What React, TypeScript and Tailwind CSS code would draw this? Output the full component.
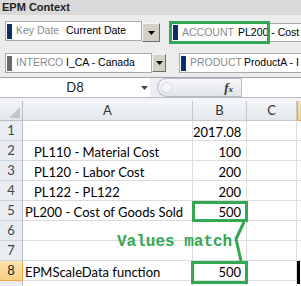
import React from "react";

const ui = { fontFamily: '"Liberation Sans", Arial, sans-serif' };
const cellFont = { fontFamily: 'Lato, "Liberation Sans", sans-serif' };

function Arrow() {
  return (
    <svg width="7" height="4" viewBox="0 0 7 4">
      <path d="M0 0 H7 L3.5 4 Z" fill="#000" />
    </svg>
  );
}

function Combo({
  label,
  value,
  bar,
  labelW,
  className,
}: {
  label: string;
  value: string;
  bar: string;
  labelW: string;
  className: string;
}) {
  return (
    <div
      className={`flex items-center bg-white border border-[#a9a9a9] text-[10.5px] whitespace-nowrap overflow-hidden ${className}`}
    >
      <div className={`w-[5px] h-[15px] ml-[1px] mr-[4px] shrink-0 ${bar}`} />
      <span className={`text-[#8a8a8a] shrink-0 ${labelW}`}>{label}</span>
      <span className="text-black">{value}</span>
    </div>
  );
}

function DropBtn({ className }: { className: string }) {
  return (
    <div
      className={`flex items-center justify-center bg-[#d4d0c8] border border-t-[#f4f4f4] border-l-[#f4f4f4] border-r-[#6e6e6e] border-b-[#6e6e6e] ${className}`}
    >
      <Arrow />
    </div>
  );
}

type Row = { n: number; a?: string; b?: string; indent?: boolean; sel?: boolean; hideNum?: boolean };

const rows: Row[] = [
  { n: 1, b: "2017.08" },
  { n: 2, a: "PL110 - Material Cost", b: "100", indent: true },
  { n: 3, a: "PL120 - Labor Cost", b: "200", indent: true },
  { n: 4, a: "PL122 - PL122", b: "200", indent: true },
  { n: 5, a: "PL200 - Cost of Goods Sold", b: "500" },
  { n: 6 },
  { n: 7 },
  { n: 8, a: "EPMScaleData function", b: "500", sel: true },
  { n: 9, hideNum: true },
];

function AccountHighlight() {
  return (
    <div className="absolute left-[169px] top-[21px] w-[101px] h-[23px] border-[3px] border-[#33a852] pointer-events-none" />
  );
}

export default function App() {
  return (
    <div className="relative w-[301px] h-[286px] overflow-hidden bg-white flex flex-col" style={ui}>
      {/* Title */}
      <div className="h-[15px] bg-[#d9d9d9] px-[2px] text-[11px] font-bold text-[#222] leading-[14px] shrink-0">
        EPM Context
      </div>
      {/* Context panel */}
      <div className="h-[62px] bg-[#ececec] shrink-0 flex flex-col pt-[6px] gap-[11px]">
        <div className="flex items-start h-[21px]">
          <Combo
            label="Key Date"
            value="Current Date"
            bar="bg-[#0b2f6e]"
            labelW="w-[50px]"
            className="ml-[5px] w-[137px] h-[20px]"
          />
          <DropBtn className="w-[18px] h-[19px] mt-[2px]" />
          <Combo
            label="ACCOUNT"
            value="PL200 - Cost"
            bar="bg-[#0b2f6e]"
            labelW="w-[56px]"
            className="ml-[11px] flex-1 h-[19px] mt-[2px] border-r-0"
          />
        </div>
        <div className="flex items-start h-[21px]">
          <Combo
            label="INTERCO"
            value="I_CA - Canada"
            bar="bg-[#6a6a6a]"
            labelW="w-[50px]"
            className="ml-[5px] w-[147px] h-[20px]"
          />
          <DropBtn className="w-[14px] h-[18px] mt-[1px]" />
          <Combo
            label="PRODUCT"
            value="ProductA - I"
            bar="bg-[#0b2f6e]"
            labelW="w-[54px]"
            className="ml-[13px] flex-1 h-[20px] border-r-0"
          />
        </div>
      </div>
      {/* Formula bar */}
      <div className="h-[21px] flex border-t border-[#a0a4aa] border-b border-b-[#b6bac0] bg-[#eceef1] shrink-0">
        <div className="w-[150px] bg-white relative flex items-center justify-center text-[13px] text-[#222]" style={cellFont}>
          D8
          <div className="absolute right-[2px] top-[8px]">
            <svg width="7" height="4" viewBox="0 0 7 4">
              <path d="M0 0 H7 L3.5 4 Z" fill="#444" />
            </svg>
          </div>
        </div>
        <div className="w-[7px]" />
        <div className="w-[84px] h-[19px] rounded-l-[10px] border border-r-0 border-[#b9bec6] bg-gradient-to-b from-[#f7f8fa] to-[#e1e4e8] flex items-center">
          <div className="w-[11px] h-[11px] rounded-full bg-[#f4f5f7] border border-[#d6d9de] ml-[3px]" />
          <div className="flex-1" />
          <div
            className="mr-[8px] italic font-bold text-[13px] text-[#333] leading-none"
            style={{ fontFamily: '"Liberation Serif", serif' }}
          >
            f<span className="text-[9px]">x</span>
          </div>
        </div>
        <div className="flex-1 bg-white border-l border-[#b9bec6]" />
      </div>
      <div className="h-[3px] bg-[#f3f4f6] shrink-0" />
      {/* Grid */}
      <div className="relative flex-1" style={cellFont}>
        <div className="grid grid-cols-[23px_170px_54px_50px_40px] auto-rows-[20px]">
          {/* Header row */}
          <div className="bg-gradient-to-b from-[#f3f5f8] to-[#e2e6eb] border-r border-b border-[#b8bec7] relative">
            <svg className="absolute right-[2px] bottom-[2px]" width="11" height="11" viewBox="0 0 11 11">
              <path d="M11 0 V11 H0 Z" fill="#c3c7cd" />
            </svg>
          </div>
          {["A", "B", "C"].map((c) => (
            <div
              key={c}
              className="bg-gradient-to-b from-[#f5f7f9] to-[#e3e7ec] border-r border-b border-[#c4c9d0] flex items-center justify-center text-[13px] text-[#333]"
            >
              {c}
            </div>
          ))}
          <div className="bg-gradient-to-b from-[#fbe4b4] to-[#f6cf7f] border-l border-[#f0a945] border-b" />
          {rows.map((r) => (
            <React.Fragment key={r.n}>
              <div
                className={`border-r border-b flex items-center justify-center text-[13px] ${
                  r.sel
                    ? "bg-gradient-to-b from-[#fbe2ae] to-[#f7d184] border-[#f0a945] text-[#222]"
                    : "bg-[#e9edf2] border-r-[#b8bec7] border-b-[#cdd3da] text-[#444]"
                }`}
              >
                {r.hideNum ? "" : r.n}
              </div>
              <div
                className={`border-r border-b border-[#dadcdd] text-[13px] text-black whitespace-nowrap overflow-visible leading-[18px] pt-[2px] ${
                  r.indent ? "pl-[11px]" : "pl-[2px]"
                }`}
              >
                {r.a ?? ""}
              </div>
              <div className="border-r border-b border-[#dadcdd] text-[13px] text-black text-right pr-[5px] leading-[18px] pt-[2px]">
                {r.b ?? ""}
              </div>
              <div className="border-r border-b border-[#dadcdd]" />
              <div className="border-b border-[#dadcdd]" />
            </React.Fragment>
          ))}
        </div>
        {/* Overlays */}
        <div className="absolute left-[192px] top-[100px] w-[56px] h-[21px] border-[3px] border-[#33a852]" />
        <div className="absolute left-[191px] top-[160px] w-[57px] h-[23px] border-[3px] border-[#33a852]" />
        <svg className="absolute left-0 top-0" width="301" height="184" viewBox="0 0 301 184">
          <polyline
            points="244,121 236,138 241,160"
            fill="none"
            stroke="#33a852"
            strokeWidth="3"
          />
        </svg>
        <div
          className="absolute left-[117px] top-[133px] text-[16px] leading-[16px] font-bold text-[#33a852] whitespace-nowrap"
          style={{ fontFamily: '"Liberation Mono", "Courier New", monospace' }}
        >
          Values match
        </div>
        <div className="absolute left-[297px] top-[160px] w-[3px] h-[23px] bg-black" />
      </div>
      <AccountHighlight />
    </div>
  );
}
